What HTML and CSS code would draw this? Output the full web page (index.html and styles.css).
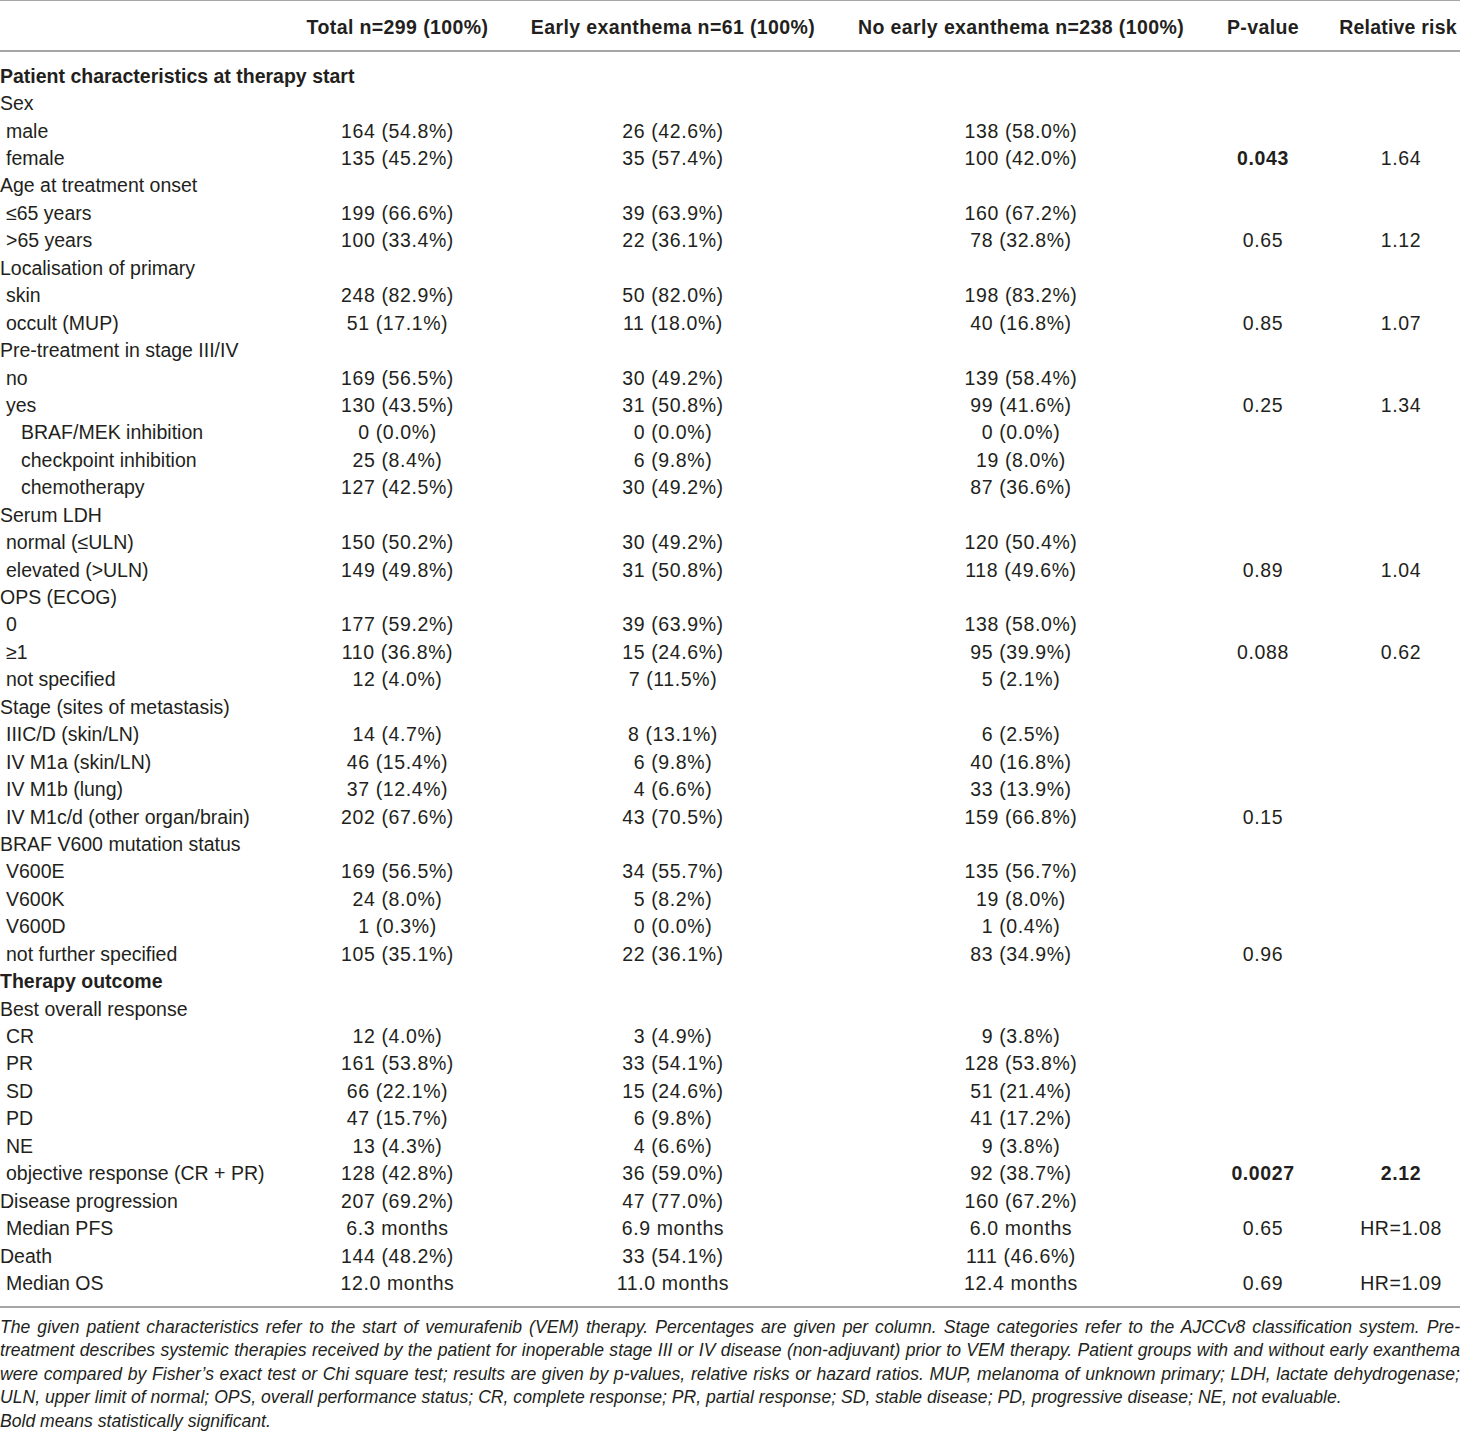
FILE: index.html
```html
<!DOCTYPE html>
<html lang="en">
    <head>
        <meta charset="UTF-8">
        <title>Early exanthema under vemurafenib</title>
        <link rel="stylesheet" href="styles.css">
    </head>
    <body>

        <table class="data">
            <colgroup>
                <col class="c-label">
                <col class="c-total">
                <col class="c-early">
                <col class="c-none">
                <col class="c-p">
                <col class="c-rr">
            </colgroup>
            <thead>
                <tr>
                    <th></th>
                    <th>Total n=299 (100%)</th>
                    <th>Early exanthema n=61 (100%)</th>
                    <th>No early exanthema n=238 (100%)</th>
                    <th>P-value</th>
                    <th class="last">Relative risk</th>
                </tr>
            </thead>
            <tbody>
                <!-- patient characteristics -->
                <tr class="first"><td class="section">Patient characteristics at therapy start</td><td></td><td></td><td></td><td></td><td></td></tr>
                <tr><td>Sex</td><td></td><td></td><td></td><td></td><td></td></tr>
                <tr><td class="sub">male</td><td>164 (54.8%)</td><td>26 (42.6%)</td><td>138 (58.0%)</td><td></td><td></td></tr>
                <tr><td class="sub">female</td><td>135 (45.2%)</td><td>35 (57.4%)</td><td>100 (42.0%)</td><td><b>0.043</b></td><td class="last">1.64</td></tr>
                <tr><td>Age at treatment onset</td><td></td><td></td><td></td><td></td><td></td></tr>
                <tr><td class="sub">≤65 years</td><td>199 (66.6%)</td><td>39 (63.9%)</td><td>160 (67.2%)</td><td></td><td></td></tr>
                <tr><td class="sub">&gt;65 years</td><td>100 (33.4%)</td><td>22 (36.1%)</td><td>78 (32.8%)</td><td>0.65</td><td class="last">1.12</td></tr>
                <tr><td>Localisation of primary</td><td></td><td></td><td></td><td></td><td></td></tr>
                <tr><td class="sub">skin</td><td>248 (82.9%)</td><td>50 (82.0%)</td><td>198 (83.2%)</td><td></td><td></td></tr>
                <tr><td class="sub">occult (MUP)</td><td>51 (17.1%)</td><td>11 (18.0%)</td><td>40 (16.8%)</td><td>0.85</td><td class="last">1.07</td></tr>
                <tr><td>Pre-treatment in stage III/IV</td><td></td><td></td><td></td><td></td><td></td></tr>
                <tr><td class="sub">no</td><td>169 (56.5%)</td><td>30 (49.2%)</td><td>139 (58.4%)</td><td></td><td></td></tr>
                <tr><td class="sub">yes</td><td>130 (43.5%)</td><td>31 (50.8%)</td><td>99 (41.6%)</td><td>0.25</td><td class="last">1.34</td></tr>
                <tr><td class="sub2">BRAF/MEK inhibition</td><td>0 (0.0%)</td><td>0 (0.0%)</td><td>0 (0.0%)</td><td></td><td></td></tr>
                <tr><td class="sub2">checkpoint inhibition</td><td>25 (8.4%)</td><td>6 (9.8%)</td><td>19 (8.0%)</td><td></td><td></td></tr>
                <tr><td class="sub2">chemotherapy</td><td>127 (42.5%)</td><td>30 (49.2%)</td><td>87 (36.6%)</td><td></td><td></td></tr>
                <tr><td>Serum LDH</td><td></td><td></td><td></td><td></td><td></td></tr>
                <tr><td class="sub">normal (≤ULN)</td><td>150 (50.2%)</td><td>30 (49.2%)</td><td>120 (50.4%)</td><td></td><td></td></tr>
                <tr><td class="sub">elevated (&gt;ULN)</td><td>149 (49.8%)</td><td>31 (50.8%)</td><td>118 (49.6%)</td><td>0.89</td><td class="last">1.04</td></tr>
                <tr><td>OPS (ECOG)</td><td></td><td></td><td></td><td></td><td></td></tr>
                <tr><td class="sub">0</td><td>177 (59.2%)</td><td>39 (63.9%)</td><td>138 (58.0%)</td><td></td><td></td></tr>
                <tr><td class="sub">≥1</td><td>110 (36.8%)</td><td>15 (24.6%)</td><td>95 (39.9%)</td><td>0.088</td><td class="last">0.62</td></tr>
                <tr><td class="sub">not specified</td><td>12 (4.0%)</td><td>7 (11.5%)</td><td>5 (2.1%)</td><td></td><td></td></tr>
                <tr><td>Stage (sites of metastasis)</td><td></td><td></td><td></td><td></td><td></td></tr>
                <tr><td class="sub">IIIC/D (skin/LN)</td><td>14 (4.7%)</td><td>8 (13.1%)</td><td>6 (2.5%)</td><td></td><td></td></tr>
                <tr><td class="sub">IV M1a (skin/LN)</td><td>46 (15.4%)</td><td>6 (9.8%)</td><td>40 (16.8%)</td><td></td><td></td></tr>
                <tr><td class="sub">IV M1b (lung)</td><td>37 (12.4%)</td><td>4 (6.6%)</td><td>33 (13.9%)</td><td></td><td></td></tr>
                <tr><td class="sub">IV M1c/d (other organ/brain)</td><td>202 (67.6%)</td><td>43 (70.5%)</td><td>159 (66.8%)</td><td>0.15</td><td></td></tr>
                <tr><td>BRAF V600 mutation status</td><td></td><td></td><td></td><td></td><td></td></tr>
                <tr><td class="sub">V600E</td><td>169 (56.5%)</td><td>34 (55.7%)</td><td>135 (56.7%)</td><td></td><td></td></tr>
                <tr><td class="sub">V600K</td><td>24 (8.0%)</td><td>5 (8.2%)</td><td>19 (8.0%)</td><td></td><td></td></tr>
                <tr><td class="sub">V600D</td><td>1 (0.3%)</td><td>0 (0.0%)</td><td>1 (0.4%)</td><td></td><td></td></tr>
                <tr><td class="sub">not further specified</td><td>105 (35.1%)</td><td>22 (36.1%)</td><td>83 (34.9%)</td><td>0.96</td><td></td></tr>

                <!-- therapy outcome -->
                <tr><td class="section">Therapy outcome</td><td></td><td></td><td></td><td></td><td></td></tr>
                <tr><td>Best overall response</td><td></td><td></td><td></td><td></td><td></td></tr>
                <tr><td class="sub">CR</td><td>12 (4.0%)</td><td>3 (4.9%)</td><td>9 (3.8%)</td><td></td><td></td></tr>
                <tr><td class="sub">PR</td><td>161 (53.8%)</td><td>33 (54.1%)</td><td>128 (53.8%)</td><td></td><td></td></tr>
                <tr><td class="sub">SD</td><td>66 (22.1%)</td><td>15 (24.6%)</td><td>51 (21.4%)</td><td></td><td></td></tr>
                <tr><td class="sub">PD</td><td>47 (15.7%)</td><td>6 (9.8%)</td><td>41 (17.2%)</td><td></td><td></td></tr>
                <tr><td class="sub">NE</td><td>13 (4.3%)</td><td>4 (6.6%)</td><td>9 (3.8%)</td><td></td><td></td></tr>
                <tr><td class="sub">objective response (CR + PR)</td><td>128 (42.8%)</td><td>36 (59.0%)</td><td>92 (38.7%)</td><td><b>0.0027</b></td><td class="last"><b>2.12</b></td></tr>
                <tr><td>Disease progression</td><td>207 (69.2%)</td><td>47 (77.0%)</td><td>160 (67.2%)</td><td></td><td></td></tr>
                <tr><td class="sub">Median PFS</td><td>6.3 months</td><td>6.9 months</td><td>6.0 months</td><td>0.65</td><td class="last">HR=1.08</td></tr>
                <tr><td>Death</td><td>144 (48.2%)</td><td>33 (54.1%)</td><td>111 (46.6%)</td><td></td><td></td></tr>
                <tr class="final"><td class="sub">Median OS</td><td>12.0 months</td><td>11.0 months</td><td>12.4 months</td><td>0.69</td><td class="last">HR=1.09</td></tr>
            </tbody>
        </table>

        <div class="notes">
            <span class="line">The given patient characteristics refer to the start of vemurafenib (VEM) therapy. Percentages are given per column. Stage categories refer to the AJCCv8 classification system. Pre-</span>
            <span class="line">treatment describes systemic therapies received by the patient for inoperable stage III or IV disease (non-adjuvant) prior to VEM therapy. Patient groups with and without early exanthema</span>
            <span class="line">were compared by Fisher’s exact test or Chi square test; results are given by p-values, relative risks or hazard ratios. MUP, melanoma of unknown primary; LDH, lactate dehydrogenase;</span>
            <span class="line end">ULN, upper limit of normal; OPS, overall performance status; CR, complete response; PR, partial response; SD, stable disease; PD, progressive disease; NE, not evaluable.</span>
            <span class="line end">Bold means statistically significant.</span>
        </div>

    </body>
</html>
```

FILE: styles.css
```css
body {
    margin: 0;
    background: #fff;
    color: #231f20;
    font-family: "Liberation Sans", Arial, sans-serif;
}
.data {
    width: 1460px;
    border-collapse: collapse;
    table-layout: fixed;
    border-top: 1px solid #a6a6a6;
    border-bottom: 2px solid #a6a6a6;
    font-size: 19.5px;
}
.c-label { width: 285px; }
.c-total { width: 225px; }
.c-early { width: 326px; }
.c-none { width: 370px; }
.c-p { width: 114px; }
.c-rr { width: 140px; }

.data th {
    height: 46px;
    padding: 3px 0 0;
    font-weight: bold;
    text-align: center;
    white-space: nowrap;
    letter-spacing: 0.4px;
    border-bottom: 2px solid #a6a6a6;
}
.data td {
    height: 27.45px;
    padding: 0;
    text-align: center;
    white-space: nowrap;
    line-height: 20px;
    letter-spacing: 0.6px;
}
.data td:first-child {
    text-align: left;
    letter-spacing: 0;
}
.data td.last {
    padding-left: 22px;
}
.data th.last {
    padding-left: 16px;
    letter-spacing: 0.2px;
}
.data tr.first td {
    padding-top: 10px;
}
.data tr.final td {
    padding-bottom: 9px;
}
.data td.section {
    font-weight: bold;
}
.data td.sub {
    padding-left: 6px;
}
.data td.sub2 {
    padding-left: 21px;
}

.notes {
    margin-top: 8px;
    font-size: 17.6px;
    font-style: italic;
    line-height: 23.6px;
}
.notes .line {
    display: block;
    white-space: nowrap;
    text-align: justify;
    text-align-last: justify;
}
.notes .line.end {
    text-align-last: left;
}
```
